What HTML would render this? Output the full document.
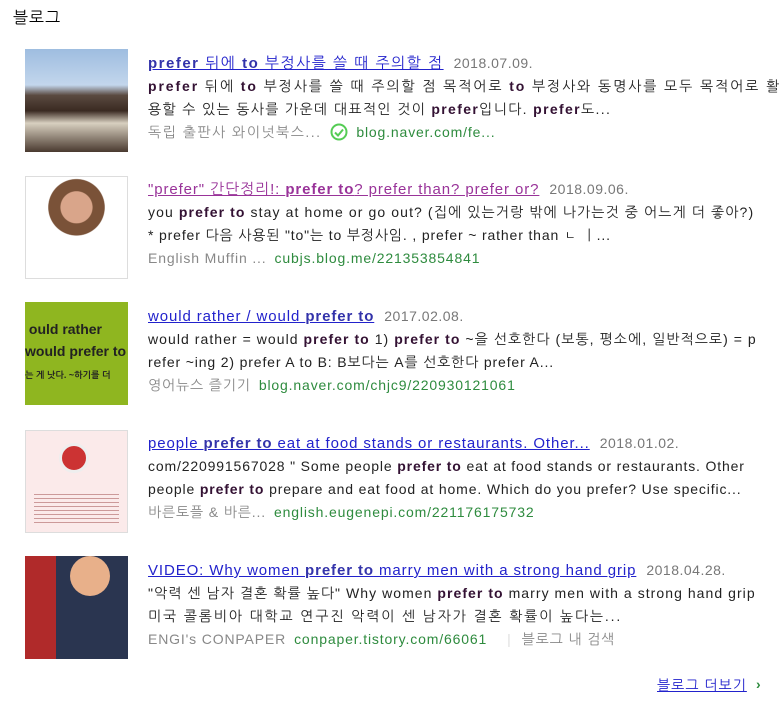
<!DOCTYPE html>
<html><head><meta charset="utf-8"><style>
body{margin:0;background:#fff;width:783px;height:715px;overflow:hidden;font-family:"Liberation Sans","NanumGothic","Noto Sans CJK KR",sans-serif;color:#222;position:relative}
h2{position:absolute;left:13px;top:8px;margin:0;font-size:16px;font-weight:normal;color:#000;letter-spacing:1px}
.th{position:absolute;left:25px;width:103px;height:103px;overflow:hidden}
.it{position:absolute;left:148px;width:640px;font-size:14px;line-height:23px;white-space:nowrap;letter-spacing:0.85px}
.t{font-size:15px;color:#2222cc;text-decoration:underline;letter-spacing:0.9px}
.t b{color:#3333aa}
.v{color:#993399}.v b{color:#993399}
.d{color:#777;font-size:14px;margin-left:10px;letter-spacing:0.5px}
.b b{color:#331133}
.m{color:#888}
.u{color:#2e8b3e;margin-left:8px}
.more{position:absolute;left:657px;top:677px;font-size:14px;color:#2222cc;text-decoration:underline;letter-spacing:1px}
</style></head><body>
<h2>블로그</h2>

<div class="th" style="top:49px;background:linear-gradient(#9ebde0 0%,#c3d6ec 35%,#5a4a40 45%,#3a2a22 60%,#d8d0c0 72%,#4a3a30 100%)"></div>
<div class="it" style="top:52px">
<span class="t" style="letter-spacing:1.5px"><b>prefer</b> 뒤에 <b>to</b> 부정사를 쓸 때 주의할 점</span><span class="d">2018.07.09.</span><br>
<span class="b" style="letter-spacing:1.9px"><b>prefer</b> 뒤에 <b>to</b> 부정사를 쓸 때 주의할 점 목적어로 <b>to</b> 부정사와 동명사를 모두 목적어로 활</span><br>
<span class="b" style="letter-spacing:1.35px">용할 수 있는 동사를 가운데 대표적인 것이 <b>prefer</b>입니다. <b>prefer</b>도...</span><br>
<span class="m" style="letter-spacing:1.5px">독립 출판사 와이넛북스...</span> <svg width="18" height="18" viewBox="0 0 18 18" style="vertical-align:-4px;margin-left:4px"><circle cx="9" cy="9" r="7.5" fill="none" stroke="#5c5" stroke-width="2"/><path d="M5 9.5l3 3 5-6" fill="none" stroke="#5c5" stroke-width="2"/></svg><span class="u">blog.naver.com/fe...</span>
</div>

<div class="th" style="top:176px;background:radial-gradient(circle at 50% 30%,#d9a58a 0 18%,#7a5238 19% 32%,#fff 33%);border:1px solid #ddd;box-sizing:border-box"></div>
<div class="it" style="top:178px">
<span class="t v">"prefer" 간단정리!: <b>prefer to</b>? prefer than? prefer or?</span><span class="d">2018.09.06.</span><br>
<span class="b" style="letter-spacing:1.1px">you <b>prefer to</b> stay at home or go out? (집에 있는거랑 밖에 나가는것 중 어느게 더 좋아?)</span><br>
<span class="b">* prefer 다음 사용된 "to"는 to 부정사임. , prefer ~ rather than ㄴ ㅣ...</span><br>
<span class="m">English Muffin ...</span><span class="u">cubjs.blog.me/221353854841</span>
</div>

<div class="th" style="top:302px;background:#8fb620;font-weight:bold;color:#222;font-size:14px;line-height:22px;padding-top:16px;box-sizing:border-box;white-space:nowrap">&nbsp;ould rather<br>would prefer to<br><span style="font-size:9px">는 게 낫다. ~하기를 더</span></div>
<div class="it" style="top:305px">
<span class="t">would rather / would <b>prefer to</b></span><span class="d">2017.02.08.</span><br>
<span class="b" style="letter-spacing:1.05px">would rather = would <b>prefer to</b> 1) <b>prefer to</b> ~을 선호한다 (보통, 평소에, 일반적으로) = p</span><br>
<span class="b">refer ~ing 2) prefer A to B: B보다는 A를 선호한다 prefer A...</span><br>
<span class="m">영어뉴스 즐기기</span><span class="u">blog.naver.com/chjc9/220930121061</span>
</div>

<div class="th" style="top:430px;background:#fbeaea;border:1px solid #ddd;box-sizing:border-box"><div style="position:absolute;left:33px;top:12px;width:24px;height:24px;border-radius:50%;background:#c33;border:3px solid #eee"></div><div style="position:absolute;left:8px;top:60px;width:85px;height:35px;background:repeating-linear-gradient(#fbeaea 0 3px,#c99 3px 4px)"></div></div>
<div class="it" style="top:432px">
<span class="t">people <b>prefer to</b> eat at food stands or restaurants. Other...</span><span class="d">2018.01.02.</span><br>
<span class="b">com/220991567028 " Some people <b>prefer to</b> eat at food stands or restaurants. Other</span><br>
<span class="b">people <b>prefer to</b> prepare and eat food at home. Which do you prefer? Use specific...</span><br>
<span class="m">바른토플 &amp; 바른...</span><span class="u">english.eugenepi.com/221176175732</span>
</div>

<div class="th" style="top:556px;background:linear-gradient(90deg,#b02a2a 0 30%,#2a3550 30% 100%)"><div style="position:absolute;left:45px;top:0;width:40px;height:40px;border-radius:50%;background:#e8b08a"></div></div>
<div class="it" style="top:559px">
<span class="t">VIDEO: Why women <b>prefer to</b> marry men with a strong hand grip</span><span class="d">2018.04.28.</span><br>
<span class="b" style="letter-spacing:1.05px">"악력 센 남자 결혼 확률 높다" Why women <b>prefer to</b> marry men with a strong hand grip</span><br>
<span class="b" style="letter-spacing:1.85px">미국 콜롬비아 대학교 연구진 악력이 센 남자가 결혼 확률이 높다는...</span><br>
<span class="m">ENGI's CONPAPER</span><span class="u">conpaper.tistory.com/66061</span><span style="color:#ddd;margin:0 10px 0 20px">|</span><span class="m">블로그 내 검색</span>
</div>

<div class="more">블로그 더보기</div><span style="position:absolute;left:756px;top:676px;color:#2e8b3e;font-size:14px;font-weight:bold">›</span>
</body></html>
